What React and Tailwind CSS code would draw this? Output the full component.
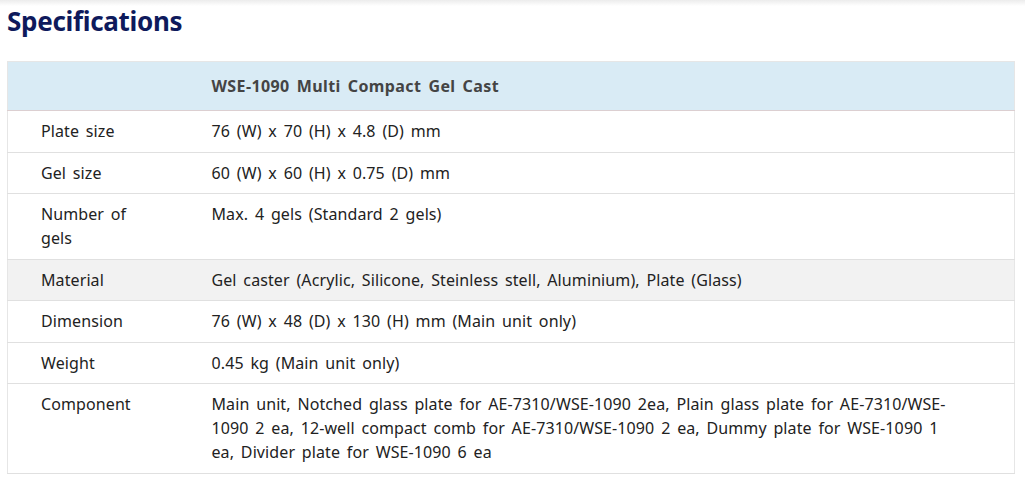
const rows = [
  { label: "Plate size", value: "76 (W) x 70 (H) x 4.8 (D) mm" },
  { label: "Gel size", value: "60 (W) x 60 (H) x 0.75 (D) mm" },
  { label: "Number of gels", value: "Max. 4 gels (Standard 2 gels)" },
  {
    label: "Material",
    value: "Gel caster (Acrylic, Silicone, Steinless stell, Aluminium), Plate (Glass)",
    shaded: true,
  },
  { label: "Dimension", value: "76 (W) x 48 (D) x 130 (H) mm (Main unit only)" },
  { label: "Weight", value: "0.45 kg (Main unit only)" },
  {
    label: "Component",
    value:
      "Main unit, Notched glass plate for AE-7310/WSE-1090 2ea, Plain glass plate for AE-7310/WSE-1090 2 ea, 12-well compact comb for AE-7310/WSE-1090 2 ea, Dummy plate for WSE-1090 1 ea, Divider plate for WSE-1090 6 ea",
  },
];

export default function App() {
  return (
    <div className="min-h-screen bg-white font-['Noto_Sans',sans-serif] text-[#222]">
      <div className="h-[6px] bg-gradient-to-b from-[#ececec] to-white" />
      <div className="px-[7px]">
        <h2 className="text-[26px] font-bold leading-[30px] text-[#0e1a5c] tracking-[-0.3px]">Specifications</h2>

        <table className="mt-[25px] w-[1008px] border-collapse border border-[#e6e6e6] text-[16px] leading-[24px] tracking-[0.1px] [word-spacing:2.5px]">
          <thead>
            <tr className="bg-[#d9ebf5] border-b border-[#dccfd1]">
              <th className="w-[171px] h-[49px]" />
              <th className="text-left font-bold text-[#444] pl-[33px] tracking-[0.4px]">WSE-1090 Multi Compact Gel Cast</th>
            </tr>
          </thead>
          <tbody>
            {rows.map((r) => (
              <tr
                key={r.label}
                className={`border-b border-[#e0e0e0] align-top ${r.shaded ? "bg-[#f2f2f2]" : "bg-white"}`}
              >
                <td className="pl-[33px] pr-[40px] py-[8.25px]">{r.label}</td>
                <td className="pl-[33px] pr-[58px] py-[8.25px]">{r.value}</td>
              </tr>
            ))}
          </tbody>
        </table>
      </div>
    </div>
  );
}
